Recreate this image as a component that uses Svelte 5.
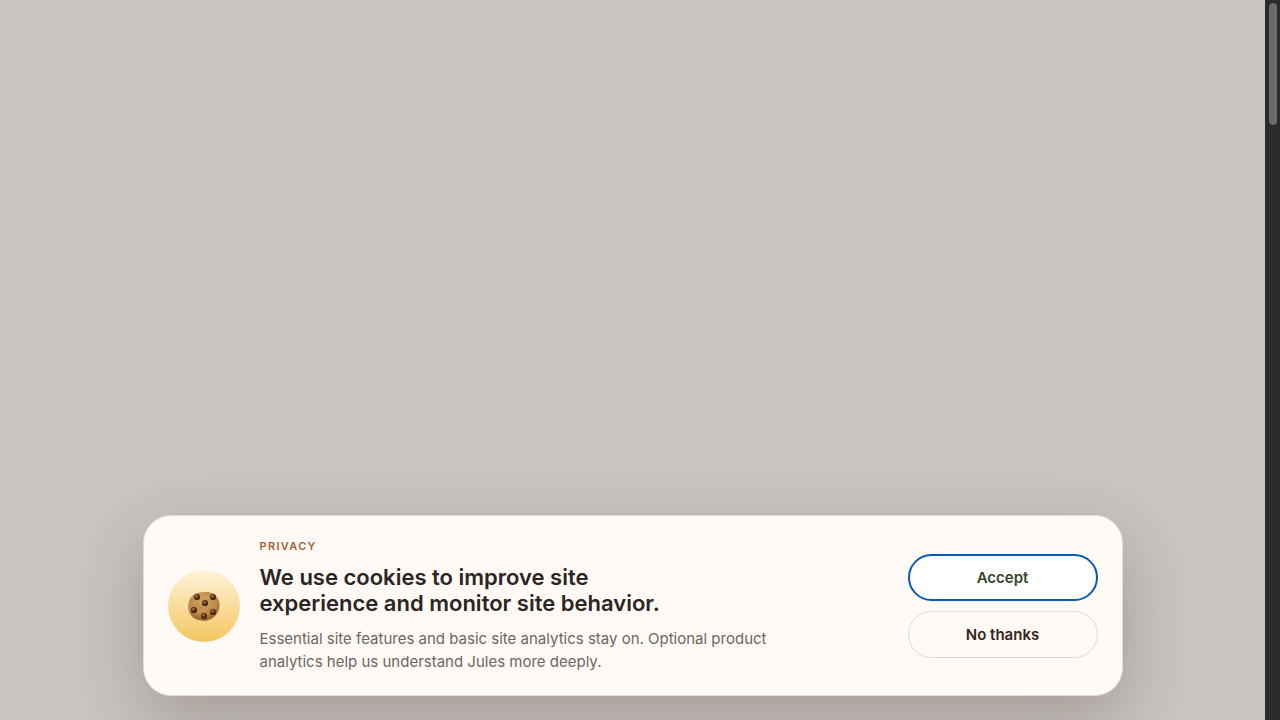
<script lang="ts">
  type Choice = "accepted" | "declined";

  let choice = $state<Choice | null>(null);

  // Chocolate chips, positioned in the 32x32 cookie drawing
  const chips = [
    { x: 9, y: 7 },
    { x: 25, y: 7 },
    { x: 17, y: 13 },
    { x: 6, y: 20 },
    { x: 16, y: 26 },
    { x: 25, y: 22 },
  ];
</script>

<div class="page">
  <main class="overlay">
    {#if choice === null}
      <section class="banner" aria-labelledby="cookie-title">
        <div class="badge" aria-hidden="true">
          <svg class="cookie" viewBox="0 0 32 32">
            <defs>
              <radialGradient id="dough" cx="0.45" cy="0.3" r="0.75">
                <stop offset="0" stop-color="#cfa05f" />
                <stop offset="0.6" stop-color="#bd8a49" />
                <stop offset="1" stop-color="#8d5825" />
              </radialGradient>
            </defs>
            <path
              d="M16 2C23 1 29 5 31 11c2 8-2 15-8 18-5 3-12 2-17-1C1 25-1 18 1 11 3 5 9 2 16 2z"
              fill="url(#dough)"
            />
            <path
              d="M6 13q4-3 7-1M20 18q4-2 7-1M10 22q4-3 7-1M17 7l4 1"
              fill="none"
              stroke="#d9ad69"
              stroke-opacity="0.6"
              stroke-width="1"
            />
            {#each chips as chip}
              <path
                d="M-3 0q0-3 3-3 3 0 3 3 0 3-2 3h-2q-2 0-2-3z"
                fill="#4a2812"
                transform="translate({chip.x} {chip.y})"
              />
              <path
                d="M-2-2l3 0 0 2-2 1-1-1z"
                fill="#8d5c3a"
                transform="translate({chip.x} {chip.y})"
              />
            {/each}
          </svg>
        </div>

        <div class="copy">
          <p class="eyebrow">PRIVACY</p>
          <h2 id="cookie-title">We use cookies to improve site experience and monitor site behavior.</h2>
          <p class="details">
            Essential site features and basic site analytics stay on. Optional product analytics
            help us understand Jules more deeply.
          </p>
        </div>

        <div class="actions">
          <button class="accept" type="button" onclick={() => (choice = "accepted")}>Accept</button>
          <button type="button" onclick={() => (choice = "declined")}>No thanks</button>
        </div>
      </section>
    {/if}
  </main>

  <div class="scroll-track" aria-hidden="true">
    <div class="scroll-thumb"></div>
  </div>
</div>

<style>
  :global(body) {
    margin: 0;
    overflow: hidden;
    background: #cac5c2;
    font-family: Inter, "Liberation Sans", sans-serif;
  }

  .page {
    display: flex;
    min-height: 100vh;
  }

  .overlay {
    flex: 1;
    display: flex;
    justify-content: center;
    align-items: flex-end;
    padding: 24px;
    overflow: hidden;
    box-sizing: border-box;
  }

  .banner {
    display: flex;
    align-items: center;
    gap: 20px;
    width: 100%;
    max-width: 980px;
    padding: 22px 24px;
    box-sizing: border-box;
    border: 1px solid #e3dcd5;
    border-radius: 28px;
    background: #fffaf5;
    box-shadow: 0 24px 70px rgba(60, 46, 36, 0.28);
  }

  .badge {
    display: grid;
    place-items: center;
    flex: none;
    width: 72px;
    height: 72px;
    border-radius: 50%;
    background: linear-gradient(#fff3da, #f3c65f);
  }

  .cookie {
    width: 32px;
    height: 32px;
  }

  .copy {
    flex: 1;
  }

  .eyebrow,
  .details {
    margin: 0;
  }

  .eyebrow {
    color: #a65f38;
    font-size: 11px;
    font-weight: 600;
    line-height: 17px;
    letter-spacing: 0.12em;
  }

  h2 {
    max-width: 420px;
    margin: 9px 0 11px;
    color: #2b2523;
    font-size: 22px;
    font-weight: 600;
    line-height: 26px;
  }

  .details {
    max-width: 540px;
    color: #6d6662;
    font-size: 15px;
    line-height: 23px;
  }

  .actions {
    display: grid;
    gap: 10px;
    flex: none;
    width: 190px;
  }

  button {
    height: 47px;
    border: 1px solid #dfdad4;
    border-radius: 24px;
    background: #fffaf5;
    color: #37231d;
    font: 600 15px Inter, "Liberation Sans", sans-serif;
    cursor: pointer;
  }

  .accept {
    border: 2px solid #075abc;
    background: #fff;
    color: #34452b;
  }

  .scroll-track {
    flex: none;
    width: 15px;
    padding: 3px 3px 3px 4px;
    box-sizing: border-box;
    background: #2b2b2b;
  }

  .scroll-thumb {
    height: 122px;
    border-radius: 4px;
    background: #6b6b6b;
  }
</style>
